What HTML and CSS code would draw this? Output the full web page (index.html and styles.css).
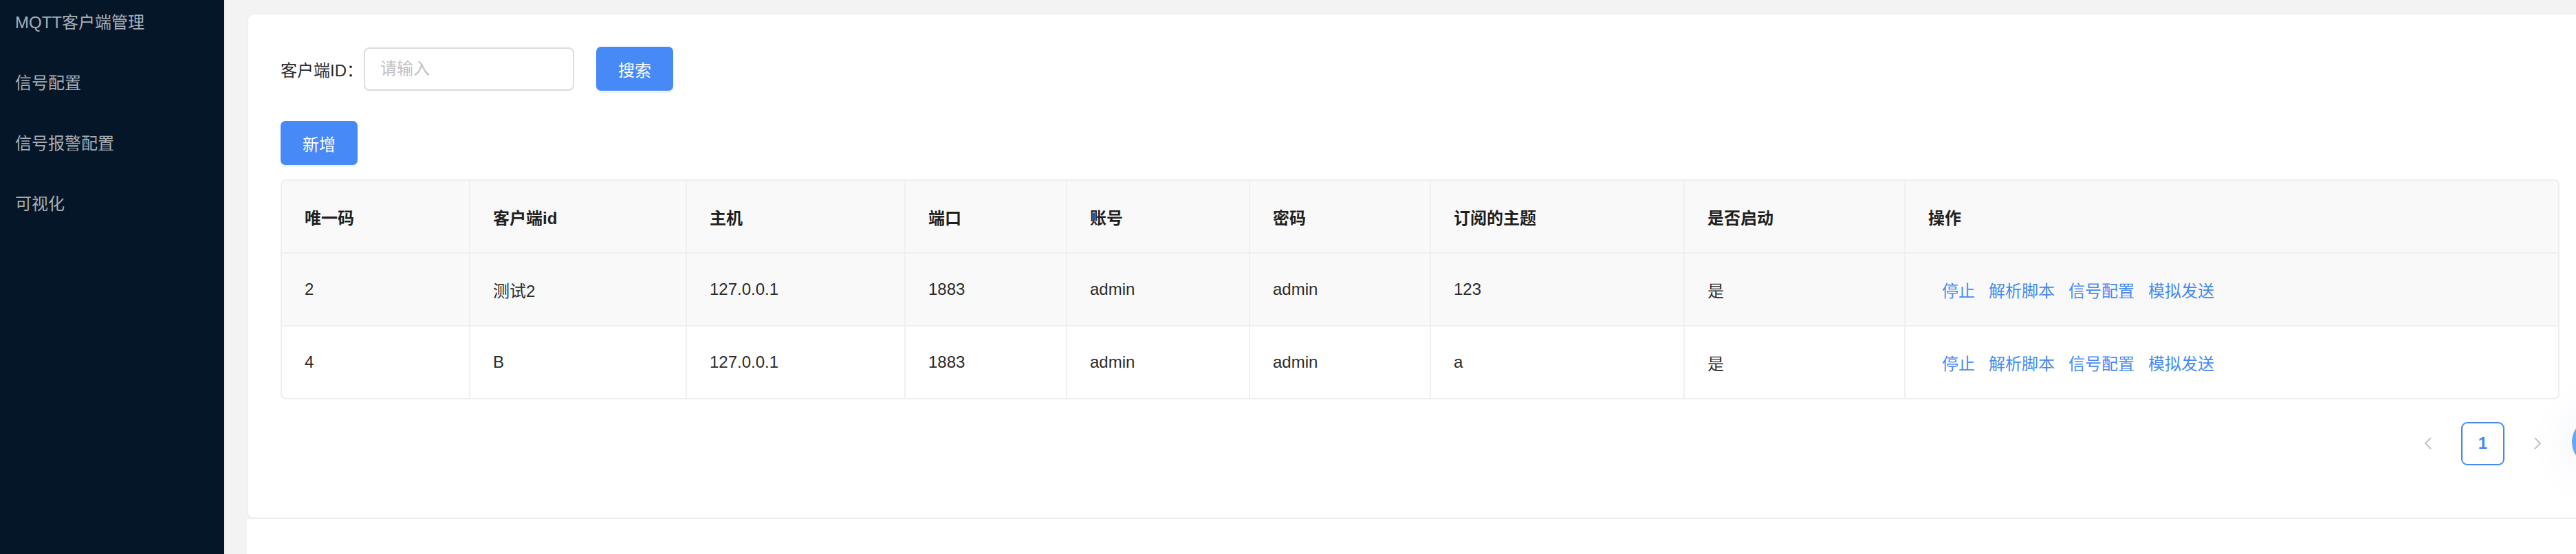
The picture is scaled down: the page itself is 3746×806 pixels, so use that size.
FILE: index.html
```html
<!DOCTYPE html>
<html lang="zh-CN">
<head>
<meta charset="utf-8">
<title>MQTT客户端管理</title>
<link rel="stylesheet" href="styles.css">
</head>
<body>
<div class="layout">
  <aside class="sidebar">
    <ul class="menu">
      <li class="menu-item">MQTT客户端管理</li>
      <li class="menu-item">信号配置</li>
      <li class="menu-item">信号报警配置</li>
      <li class="menu-item">可视化</li>
    </ul>
  </aside>
  <main class="main">
    <section class="card">
      <form class="search-row">
        <label class="search-label">客户端ID<span class="colon">：</span></label>
        <input class="search-input" type="text" placeholder="请输入">
        <button type="button" class="btn btn-primary btn-search">搜索</button>
      </form>
      <div class="toolbar">
        <button type="button" class="btn btn-primary">新增</button>
      </div>
      <div class="table-wrap">
        <table class="table">
          <colgroup>
            <col class="c1"><col class="c2"><col class="c3"><col class="c4"><col class="c5"><col class="c6"><col class="c7"><col class="c8"><col class="c9">
          </colgroup>
          <thead>
            <tr>
              <th>唯一码</th><th>客户端id</th><th>主机</th><th>端口</th><th>账号</th><th>密码</th><th>订阅的主题</th><th>是否启动</th><th>操作</th>
            </tr>
          </thead>
          <tbody>
            <tr class="row-hover">
              <td>2</td><td>测试2</td><td>127.0.0.1</td><td>1883</td><td>admin</td><td>admin</td><td>123</td><td>是</td>
              <td class="ops"><a class="link">停止</a><a class="link">解析脚本</a><a class="link">信号配置</a><a class="link">模拟发送</a></td>
            </tr>
            <tr>
              <td>4</td><td>B</td><td>127.0.0.1</td><td>1883</td><td>admin</td><td>admin</td><td>a</td><td>是</td>
              <td class="ops"><a class="link">停止</a><a class="link">解析脚本</a><a class="link">信号配置</a><a class="link">模拟发送</a></td>
            </tr>
          </tbody>
        </table>
      </div>
      <nav class="pagination">
        <button type="button" class="pg-btn" aria-label="上一页">
          <svg width="12" height="20" viewBox="0 0 12 20"><path d="M10 2 L2 10 L10 18" fill="none" stroke="#c3c3c3" stroke-width="2"/></svg>
        </button>
        <span class="pg-item active">1</span>
        <button type="button" class="pg-btn" aria-label="下一页">
          <svg width="12" height="20" viewBox="0 0 12 20"><path d="M2 2 L10 10 L2 18" fill="none" stroke="#c3c3c3" stroke-width="2"/></svg>
        </button>
      </nav>
    </section>
    <div class="footer"></div>
  </main>
</div>
<div class="float-btn"></div>
</body>
</html>
```
FILE: styles.css
```css
html, body {
  margin: 0;
  padding: 0;
  height: 100%;
  overflow: hidden;
}
body {
  font-family: "Liberation Sans", "Noto Sans CJK SC", sans-serif;
  font-size: 24px;
  color: #2b2b2b;
  background: #ffffff;
}
.layout {
  display: flex;
  height: 806px;
  width: 3800px;
}
.sidebar {
  width: 326px;
  flex: 0 0 326px;
  background: #051628;
  overflow: hidden;
}
.menu {
  list-style: none;
  margin: -11px 0 0 0;
  padding: 0;
}
.menu-item {
  height: 88px;
  line-height: 88px;
  padding-left: 22px;
  color: #a9afb6;
  font-size: 24px;
  white-space: nowrap;
}
.main {
  flex: 1;
  display: flex;
  flex-direction: column;
  background: #f3f3f3;
  padding: 20px 0 0 33px;
}
.card {
  width: 3410px;
  height: 735px;
  box-sizing: border-box;
  background: #fff;
  border: 1px solid #ebebeb;
  border-bottom: 2px solid #ececec;
  border-radius: 8px;
  padding: 47px 47px 0 47px;
  margin-left: 1px;
}
.footer {
  flex: 1;
  background: #fff;
}
.search-row {
  display: flex;
  align-items: center;
  height: 64px;
  margin: 0;
}
.search-label {
  color: #2b2b2b;
  font-size: 24px;
  margin-right: 12px;
  white-space: nowrap;
}
.colon {
  margin: 0 -11px 0 0;
}
.search-input {
  width: 306px;
  height: 63px;
  box-sizing: border-box;
  border: 2px solid #dcdcdc;
  border-radius: 8px;
  padding: 0 22px;
  font-family: "Liberation Sans", "Noto Sans CJK SC", sans-serif;
  font-size: 24px;
  color: #333;
  outline: none;
}
.search-input::placeholder {
  color: #c2c2c2;
}
.btn {
  height: 64px;
  width: 112px;
  border: none;
  border-radius: 7px;
  font-family: "Liberation Sans", "Noto Sans CJK SC", sans-serif;
  font-size: 24px;
  cursor: pointer;
  padding: 0;
}
.btn-primary {
  background: #4689f7;
  color: #fff;
  box-shadow: 0 3px 0 #eef4fe;
}
.btn-search {
  margin-left: 32px;
}
.toolbar {
  margin-top: 44px;
  height: 64px;
}
.table-wrap {
  margin-top: 21px;
  border: 2px solid #eeeeee;
  border-radius: 8px;
  overflow: hidden;
  width: 3314px;
  box-sizing: border-box;
}
.table {
  width: 100%;
  border-collapse: collapse;
  table-layout: fixed;
}
.c1 { width: 273px; }
.c2 { width: 315px; }
.c3 { width: 318px; }
.c4 { width: 235px; }
.c5 { width: 266px; }
.c6 { width: 263px; }
.c7 { width: 369px; }
.c8 { width: 321px; }
.c9 { width: auto; }
.table th,
.table td {
  height: 104px;
  padding: 0 0 0 33px;
  text-align: left;
  border-right: 2px solid #f0f0f0;
  border-bottom: 2px solid #efefef;
  font-size: 24px;
  white-space: nowrap;
}
.table th:last-child,
.table td:last-child {
  border-right: none;
}
.table tbody tr:last-child td {
  border-bottom: none;
}
.table th {
  background: #f9f9f9;
  color: #1f1f1f;
  font-weight: 700;
}
.table td {
  color: #2b2b2b;
  background: #fff;
}
.table .row-hover td {
  background: #f9f9f9;
}
.table td.ops {
  padding-left: 53px;
}
.link {
  color: #4689f5;
  margin-right: 20px;
  cursor: pointer;
}
.pagination {
  display: flex;
  justify-content: flex-end;
  align-items: center;
  gap: 16px;
  margin-top: 32px;
  width: 3314px;
}
.pg-btn {
  width: 64px;
  height: 64px;
  border: none;
  background: transparent;
  display: flex;
  align-items: center;
  justify-content: center;
  padding: 0;
}
.pg-item {
  width: 63px;
  height: 63px;
  box-sizing: border-box;
  border: 2px solid #4689f5;
  border-radius: 9px;
  color: #4689f5;
  font-weight: 700;
  font-size: 24px;
  display: flex;
  align-items: center;
  justify-content: center;
}
.float-btn {
  position: absolute;
  left: 3740px;
  top: 607px;
  width: 72px;
  height: 72px;
  border-radius: 50%;
  background: #68a6fa;
  box-shadow: 0 0 50px 20px rgba(120, 130, 220, 0.06);
}
```
